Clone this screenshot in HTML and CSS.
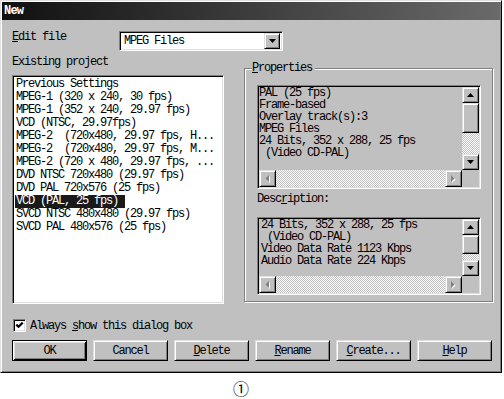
FILE: index.html
```html
<!DOCTYPE html>
<html lang="en">
<head>
    <meta charset="UTF-8">
    <meta name="viewport" content="width=device-width, initial-scale=1.0">
    <title>New</title>
    <link rel="stylesheet" href="styles.css">
</head>
<body>
    <div class="dialog">
        <div class="titlebar">New</div>

        <div class="dialog-body">
            <div class="edit-row">
                <label class="edit-label"><u>E</u>dit file</label>
                <div class="combo">
                    <span class="combo-text">MPEG Files</span>
                    <span class="btn3d combo-btn">
                        <svg width="7" height="4" viewBox="0 0 7 4"><polygon points="0,0 7,0 3.5,4" fill="#000"/></svg>
                    </span>
                </div>
            </div>

            <div class="main-row">
                <div class="left-col">
                    <div class="label">Existing project</div>
                    <div class="listbox sunken">
                        <div class="item">Previous Settings</div>
                        <div class="item">MPEG-1 (320 x 240, 30 fps)</div>
                        <div class="item">MPEG-1 (352 x 240, 29.97 fps)</div>
                        <div class="item">VCD (NTSC, 29.97fps)</div>
                        <div class="item">MPEG-2  (720x480, 29.97 fps, H...</div>
                        <div class="item">MPEG-2  (720x480, 29.97 fps, M...</div>
                        <div class="item">MPEG-2 (720 x 480, 29.97 fps, ...</div>
                        <div class="item">DVD NTSC 720x480 (29.97 fps)</div>
                        <div class="item">DVD PAL 720x576 (25 fps)</div>
                        <div class="item"><span class="sel">VCD (PAL, 25 fps)</span></div>
                        <div class="item">SVCD NTSC 480x480 (29.97 fps)</div>
                        <div class="item">SVCD PAL 480x576 (25 fps)</div>
                    </div>
                </div>

                <div class="group">
                    <span class="legend"><u>P</u>roperties</span>

                    <div class="textbox sunken props">
                        <div class="text-area">PAL (25 fps)
Frame-based
Overlay track(s):3
MPEG Files
24 Bits, 352 x 288, 25 fps
 (Video CD-PAL)</div>
                        <div class="vscroll">
                            <span class="btn3d sb-btn">
                                <svg width="7" height="4" viewBox="0 0 7 4"><polygon points="3.5,0 7,4 0,4" fill="#000"/></svg>
                            </span>
                            <span class="btn3d thumb thumb-props"></span>
                            <span class="track"></span>
                            <span class="btn3d sb-btn">
                                <svg width="7" height="4" viewBox="0 0 7 4"><polygon points="0,0 7,0 3.5,4" fill="#000"/></svg>
                            </span>
                        </div>
                        <div class="hscroll">
                            <span class="btn3d sb-btn">
                                <svg width="5" height="8" viewBox="0 0 5 8"><polygon points="5,1 5,8 1.5,4.5" fill="#fff"/><polygon points="4,0 4,7 0.5,3.5" fill="#808080"/></svg>
                            </span>
                            <span class="track"></span>
                            <span class="btn3d sb-btn">
                                <svg width="5" height="8" viewBox="0 0 5 8"><polygon points="1,1 1,8 4.5,4.5" fill="#fff"/><polygon points="0,0 0,7 3.5,3.5" fill="#808080"/></svg>
                            </span>
                        </div>
                        <div class="corner"></div>
                    </div>

                    <div class="desc-label">Desc<u>r</u>iption:</div>

                    <div class="textbox sunken desc">
                        <div class="text-area">24 Bits, 352 x 288, 25 fps
 (Video CD-PAL)
Video Data Rate 1123 Kbps
Audio Data Rate 224 Kbps</div>
                        <div class="vscroll">
                            <span class="btn3d sb-btn">
                                <svg width="7" height="4" viewBox="0 0 7 4"><polygon points="3.5,0 7,4 0,4" fill="#000"/></svg>
                            </span>
                            <span class="btn3d thumb thumb-desc"></span>
                            <span class="track"></span>
                            <span class="btn3d sb-btn">
                                <svg width="7" height="4" viewBox="0 0 7 4"><polygon points="0,0 7,0 3.5,4" fill="#000"/></svg>
                            </span>
                        </div>
                        <div class="hscroll">
                            <span class="btn3d sb-btn">
                                <svg width="5" height="8" viewBox="0 0 5 8"><polygon points="5,1 5,8 1.5,4.5" fill="#fff"/><polygon points="4,0 4,7 0.5,3.5" fill="#808080"/></svg>
                            </span>
                            <span class="track"></span>
                            <span class="btn3d sb-btn">
                                <svg width="5" height="8" viewBox="0 0 5 8"><polygon points="1,1 1,8 4.5,4.5" fill="#fff"/><polygon points="0,0 0,7 3.5,3.5" fill="#808080"/></svg>
                            </span>
                        </div>
                        <div class="corner"></div>
                    </div>
                </div>
            </div>

            <div class="check-row">
                <span class="checkbox sunken">
                    <svg width="9" height="9" viewBox="0 0 9 9"><path d="M1.3 3.6 L3.5 5.8 L7.7 1.6" fill="none" stroke="#000" stroke-width="2.2"/></svg>
                </span>
                <span>Always <u>s</u>how this dialog box</span>
            </div>

            <div class="button-row">
                <button class="btn3d push default">OK</button>
                <button class="btn3d push">Cancel</button>
                <button class="btn3d push"><u>D</u>elete</button>
                <button class="btn3d push"><u>R</u>ename</button>
                <button class="btn3d push"><u>C</u>reate...</button>
                <button class="btn3d push"><u>H</u>elp</button>
            </div>
        </div>
    </div>

    <div class="caption">①</div>
</body>
</html>
```

FILE: styles.css
```css
body {
    margin: 0;
    background-color: #fff;
    color: #000;
    font-family: "Liberation Mono", "DejaVu Sans Mono", monospace;
    font-size: 12px;
    letter-spacing: -1.2px;
}

u {
    text-underline-offset: 1px;
}

/* Window frame */
.dialog {
    width: 502px;
    height: 373px;
    box-sizing: border-box;
    padding: 1px;
    background-color: #c0c0c0;
    border: 1px solid;
    border-color: #dfdfdf #000 #000 #dfdfdf;
    box-shadow: inset 1px 1px 0 #fff, inset -1px -1px 0 #808080;
}

.titlebar {
    height: 18px;
    line-height: 18px;
    padding-left: 2px;
    background: linear-gradient(to right, #101010, #6a6a6a);
    color: #fff;
    font-weight: bold;
    letter-spacing: -0.8px;
}

.dialog-body {
    padding: 0 7px 0 10px;
}

/* 3D borders */
.sunken {
    border: 1px solid;
    border-color: #808080 #fff #fff #808080;
    box-shadow: inset 1px 1px 0 #000, inset -1px -1px 0 #dfdfdf;
}

.btn3d {
    box-sizing: border-box;
    background-color: #c0c0c0;
    border: 1px solid;
    border-color: #dfdfdf #000 #000 #dfdfdf;
    box-shadow: inset 1px 1px 0 #fff, inset -1px -1px 0 #808080;
    display: flex;
    align-items: center;
    justify-content: center;
}

/* Edit file row */
.edit-row {
    display: flex;
    margin-top: 11px;
    height: 20px;
}

.edit-label {
    width: 107px;
    line-height: 12px;
}

.combo {
    box-sizing: border-box;
    width: 164px;
    height: 20px;
    display: flex;
    align-items: center;
    justify-content: space-between;
    padding: 2px;
    background-color: #fff;
    border: 1px solid;
    border-color: #808080 #fff #fff #808080;
    box-shadow: inset 1px 1px 0 #000, inset -1px -1px 0 #dfdfdf;
}

.combo-text {
    padding-left: 2px;
}

.combo-btn {
    width: 16px;
    height: 16px;
}

/* Main area */
.main-row {
    display: flex;
    margin-top: 5px;
}

.left-col {
    width: 212px;
}

.label {
    line-height: 12px;
}

.listbox {
    box-sizing: border-box;
    height: 229px;
    margin-top: 7px;
    padding-top: 2px;
    background-color: #fff;
}

.item {
    height: 13px;
    line-height: 13px;
    padding-left: 3px;
    white-space: pre;
}

.sel {
    display: inline-block;
    margin-left: -1px;
    padding: 0 7px 0 1px;
    background-color: #1a1a1a;
    color: #fff;
}

.group {
    position: relative;
    box-sizing: border-box;
    width: 249px;
    height: 234px;
    margin: 12px 0 0 20px;
    padding: 16px 0 0 12px;
    border: 1px solid #808080;
    box-shadow: inset 1px 1px 0 #fff, 1px 1px 0 #fff;
}

.legend {
    position: absolute;
    top: -7px;
    left: 7px;
    line-height: 12px;
    padding-right: 3px;
    background-color: #c0c0c0;
}

.desc-label {
    margin-top: 4px;
    line-height: 12px;
}

/* Read-only text boxes with scrollbars */
.textbox {
    box-sizing: border-box;
    width: 224px;
    padding: 1px;
    display: grid;
    grid-template-columns: 1fr 17px;
    grid-template-rows: 1fr 17px;
    background-color: #c0c0c0;
}

.props {
    height: 104px;
}

.desc {
    height: 78px;
    margin-top: 12px;
}

.text-area {
    line-height: 12px;
    white-space: pre;
    overflow: hidden;
}

.desc .text-area {
    padding-left: 2px;
}

.vscroll {
    display: flex;
    flex-direction: column;
}

.hscroll {
    display: flex;
}

.sb-btn {
    flex: none;
    width: 17px;
    height: 17px;
}

.vscroll .sb-btn {
    height: 16px;
}

.track {
    flex: 1;
    background: repeating-conic-gradient(#fff 0 25%, #c0c0c0 0 50%) 0 0 / 2px 2px;
}

.thumb-props {
    height: 30px;
}

.thumb-desc {
    height: 19px;
}

.corner {
    background-color: #c0c0c0;
}

/* Checkbox */
.check-row {
    display: flex;
    align-items: center;
    gap: 4px;
    margin-top: 15px;
    height: 13px;
}

.checkbox {
    box-sizing: border-box;
    width: 13px;
    height: 13px;
    margin-left: 1px;
    background-color: #fff;
    display: flex;
    align-items: center;
    justify-content: center;
}

/* Push buttons */
.button-row {
    display: flex;
    gap: 6px;
    margin-top: 8px;
}

.push {
    width: 75px;
    height: 21px;
    padding: 0;
    font-family: inherit;
    font-size: 12px;
    letter-spacing: -1.2px;
    color: #000;
}

.push.default {
    border-color: #000;
    box-shadow: inset 1px 1px 0 #fff, inset -1px -1px 0 #000, inset 2px 2px 0 #dfdfdf, inset -2px -2px 0 #808080;
}

.caption {
    margin-top: 7px;
    padding-left: 233px;
    line-height: 17px;
    font-family: "Noto Sans CJK SC", "DejaVu Sans", sans-serif;
    font-size: 16px;
    letter-spacing: 0;
}
```
